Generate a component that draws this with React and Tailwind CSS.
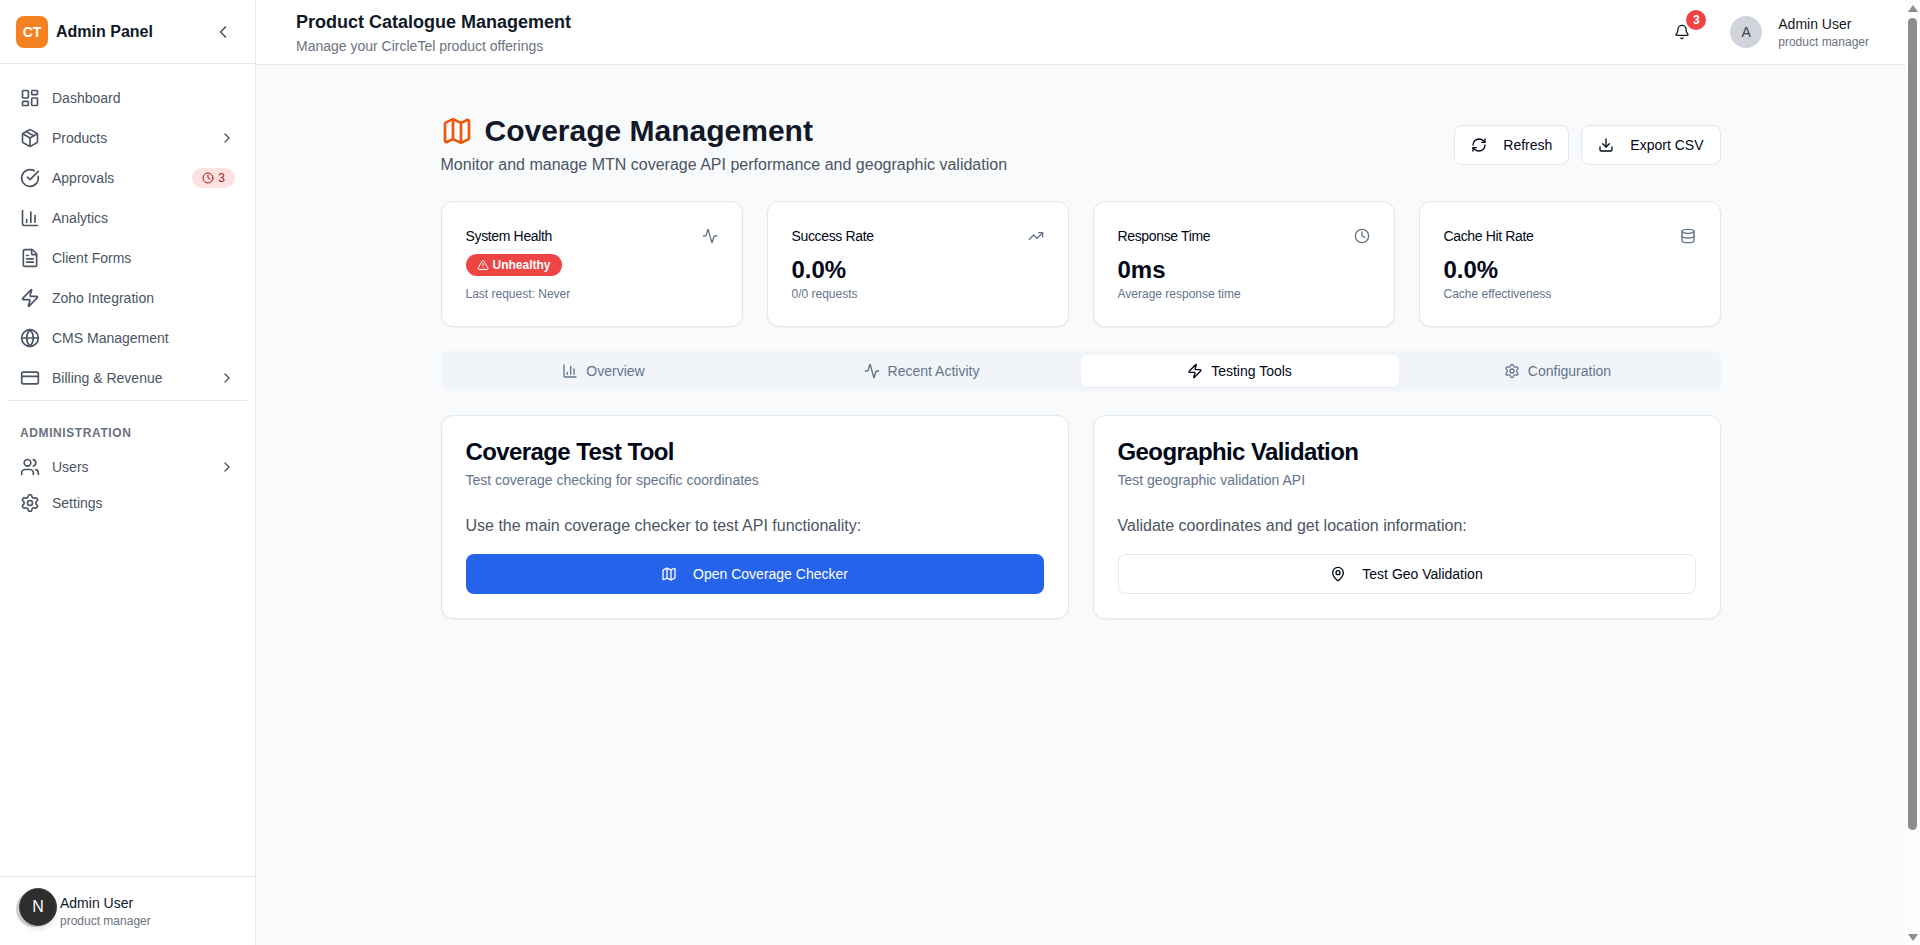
import {
  Activity,
  Bell,
  ChartColumn,
  ChevronLeft,
  ChevronRight,
  CircleCheckBig,
  Clock,
  CreditCard,
  Database,
  Download,
  FileText,
  Globe,
  LayoutDashboard,
  Map,
  MapPin,
  Package,
  RefreshCw,
  Settings,
  TrendingUp,
  TriangleAlert,
  Users,
  Zap,
} from "lucide-react";

const navItems = [
  { label: "Dashboard", icon: LayoutDashboard },
  { label: "Products", icon: Package, arrow: true },
  { label: "Approvals", icon: CircleCheckBig, badge: "3" },
  { label: "Analytics", icon: ChartColumn },
  { label: "Client Forms", icon: FileText },
  { label: "Zoho Integration", icon: Zap },
  { label: "CMS Management", icon: Globe },
  { label: "Billing & Revenue", icon: CreditCard, arrow: true },
];

const stats = [
  { title: "Success Rate", icon: TrendingUp, value: "0.0%", note: "0/0 requests" },
  { title: "Response Time", icon: Clock, value: "0ms", note: "Average response time" },
  { title: "Cache Hit Rate", icon: Database, value: "0.0%", note: "Cache effectiveness" },
];

const tabs = [
  { label: "Overview", icon: ChartColumn },
  { label: "Recent Activity", icon: Activity },
  { label: "Testing Tools", icon: Zap, active: true },
  { label: "Configuration", icon: Settings },
];

const NavRow = ({ item, className }) => {
  const Icon = item.icon;
  return (
    <div className={`flex items-center gap-3 px-3 text-sm text-[#4b5563] ${className}`}>
      <Icon className="w-5 h-5 shrink-0" strokeWidth={2} />
      <span className="flex-1">{item.label}</span>
      {item.arrow && <ChevronRight className="w-4 h-4" />}
      {item.badge && (
        <span className="flex items-center gap-1 h-5 px-2.5 rounded-full bg-[#fee2e2] text-xs text-[#991b1b]">
          <Clock className="w-3 h-3" />
          {item.badge}
        </span>
      )}
    </div>
  );
};

const Sidebar = () => (
  <aside className="w-64 shrink-0 h-full flex flex-col bg-white border-r border-[#e5e7eb]">
    <div className="h-16 shrink-0 flex items-center justify-between pl-4 pr-4 border-b border-[#e5e7eb]">
      <div className="flex items-center gap-2">
        <div className="w-8 h-8 rounded-lg bg-[#f58220] flex items-center justify-center text-sm font-bold text-white">
          CT
        </div>
        <span className="text-base font-bold text-[#111827]">Admin Panel</span>
      </div>
      <ChevronLeft className="w-5 h-5 text-[#4b5563] mr-1.5" />
    </div>

    <nav className="flex-1 px-2 pt-3.5">
      {navItems.map((item) => (
        <NavRow key={item.label} item={item} className="h-10" />
      ))}
      <div className="mt-0.5 border-t border-[#e5e7eb]" />
      <h3 className="mt-6 mb-2 px-3 text-xs leading-4 font-semibold tracking-wider uppercase text-[#6b7280]">
        Administration
      </h3>
      <NavRow item={{ label: "Users", icon: Users, arrow: true }} className="h-9" />
      <NavRow item={{ label: "Settings", icon: Settings }} className="h-9" />
    </nav>

    <div className="relative h-[69px] shrink-0 border-t border-[#e5e7eb] flex items-center gap-2 px-4">
      <div className="w-9 h-9 mb-1 rounded-full bg-[#d1d5db]" />
      <div>
        <p className="text-sm leading-5 text-[#111827]">Admin User</p>
        <p className="text-xs leading-4 text-[#6b7280]">product manager</p>
      </div>
      {/* boton del dev indicator de next, queda encima del avatar */}
      <div className="absolute left-[19px] top-[11px] w-[38px] h-[38px] rounded-full bg-[#2e2e2e] border border-[#444] flex items-center justify-center text-base font-light text-white shadow-md">
        N
      </div>
    </div>
  </aside>
);

const Header = () => (
  <header className="h-[65px] shrink-0 flex items-center justify-between bg-white border-b border-[#e5e7eb] pl-10 pr-9">
    <div>
      <h1 className="text-lg leading-7 font-bold text-[#111827]">Product Catalogue Management</h1>
      <p className="text-sm leading-5 text-[#6b7280]">Manage your CircleTel product offerings</p>
    </div>
    <div className="flex items-center">
      <div className="relative mr-10">
        <Bell className="w-4 h-4 text-[#111827]" />
        <span className="absolute -top-[14px] left-[12px] w-5 h-5 rounded-full bg-[#ef4444] flex items-center justify-center text-xs font-bold text-white">
          3
        </span>
      </div>
      <div className="w-8 h-8 rounded-full bg-[#d1d5db] flex items-center justify-center text-sm text-[#374151] mr-4">
        A
      </div>
      <div>
        <p className="text-sm leading-5 text-[#111827]">Admin User</p>
        <p className="text-xs leading-4 text-[#6b7280]">product manager</p>
      </div>
    </div>
  </header>
);

const Card = ({ className = "", children }) => (
  <div className={`bg-white border border-[#e2e8f0] rounded-xl shadow-[0_1px_2px_rgba(0,0,0,0.05)] p-6 ${className}`}>
    {children}
  </div>
);

const StatCard = ({ title, icon: Icon, note, children }) => (
  <Card>
    <div className="flex items-center justify-between h-5 mb-2">
      <span className="text-sm tracking-tight text-[#020817]">{title}</span>
      <Icon className="w-4 h-4 text-[#64748b]" />
    </div>
    <div className="h-8">{children}</div>
    <p className="text-xs leading-4 text-[#64748b]">{note}</p>
  </Card>
);

const ToolCard = ({ title, subtitle, text, children }) => (
  <Card>
    <h2 className="text-2xl leading-6 font-bold tracking-tight text-[#020817]">{title}</h2>
    <p className="mt-1.5 text-sm leading-5 text-[#64748b]">{subtitle}</p>
    <p className="mt-6 mb-4 text-base leading-6 text-[#4b5563]">{text}</p>
    {children}
  </Card>
);

const Scrollbar = () => (
  <div className="w-[15px] shrink-0 h-full flex flex-col items-center bg-[#fdfdfd]">
    <div className="mt-[5px] w-0 h-0 border-x-[5px] border-x-transparent border-b-[7px] border-b-[#8c8c8c]" />
    <div className="mt-[6px] w-[9px] h-[812px] rounded-full bg-[#8c8c8c]" />
    <div className="mt-auto mb-[4px] w-0 h-0 border-x-[5px] border-x-transparent border-t-[7px] border-t-[#8c8c8c]" />
  </div>
);

export default function App() {
  return (
    <div className="h-screen w-full flex overflow-hidden bg-[#f9fafb] font-['Liberation_Sans',Arial,sans-serif]">
      <Sidebar />
      <div className="flex-1 min-w-0 flex flex-col">
        <Header />
        <main className="flex-1 pt-12">
          <div className="max-w-7xl mx-auto space-y-6">
            <div className="flex items-center justify-between">
              <div>
                <div className="flex items-center gap-3">
                  <Map className="w-8 h-8 text-[#ea580c]" />
                  <h1 className="text-3xl leading-9 font-bold text-[#111827]">Coverage Management</h1>
                </div>
                <p className="mt-1 text-base leading-6 text-[#4b5563]">
                  Monitor and manage MTN coverage API performance and geographic validation
                </p>
              </div>
              <div className="flex items-center gap-3">
                <button className="h-10 px-4 flex items-center gap-4 bg-white border border-[#e2e8f0] rounded-lg text-sm text-[#020817]">
                  <RefreshCw className="w-4 h-4" />
                  Refresh
                </button>
                <button className="h-10 px-4 flex items-center gap-4 bg-white border border-[#e2e8f0] rounded-lg text-sm text-[#020817]">
                  <Download className="w-4 h-4" />
                  Export CSV
                </button>
              </div>
            </div>

            <div className="grid grid-cols-4 gap-6">
              <StatCard title="System Health" icon={Activity} note="Last request: Never">
                <span className="inline-flex items-center gap-1 h-[22px] px-[11px] rounded-full bg-[#ef4444] text-xs font-bold text-white">
                  <TriangleAlert className="w-3 h-3" />
                  Unhealthy
                </span>
              </StatCard>
              {stats.map((s) => (
                <StatCard key={s.title} title={s.title} icon={s.icon} note={s.note}>
                  <div className="text-2xl leading-8 font-bold text-[#020817]">{s.value}</div>
                </StatCard>
              ))}
            </div>

            <div className="grid grid-cols-4 h-10 p-1 rounded-lg bg-[#f1f5f9]">
              {tabs.map((tab) => {
                const Icon = tab.icon;
                return (
                  <div
                    key={tab.label}
                    className={`flex items-center justify-center gap-2 rounded-md text-sm ${
                      tab.active ? "bg-white text-[#020817] shadow-[0_1px_2px_rgba(0,0,0,0.05)]" : "text-[#64748b]"
                    }`}
                  >
                    <Icon className="w-4 h-4" />
                    {tab.label}
                  </div>
                );
              })}
            </div>

            <div className="grid grid-cols-2 gap-6">
              <ToolCard
                title="Coverage Test Tool"
                subtitle="Test coverage checking for specific coordinates"
                text="Use the main coverage checker to test API functionality:"
              >
                <button className="w-full h-10 flex items-center justify-center gap-4 rounded-lg bg-[#2563eb] text-sm text-white">
                  <Map className="w-4 h-4" />
                  Open Coverage Checker
                </button>
              </ToolCard>
              <ToolCard
                title="Geographic Validation"
                subtitle="Test geographic validation API"
                text="Validate coordinates and get location information:"
              >
                <button className="w-full h-10 flex items-center justify-center gap-4 rounded-lg bg-white border border-[#e2e8f0] text-sm text-[#020817]">
                  <MapPin className="w-4 h-4" />
                  Test Geo Validation
                </button>
              </ToolCard>
            </div>
          </div>
        </main>
      </div>
      <Scrollbar />
    </div>
  );
}
